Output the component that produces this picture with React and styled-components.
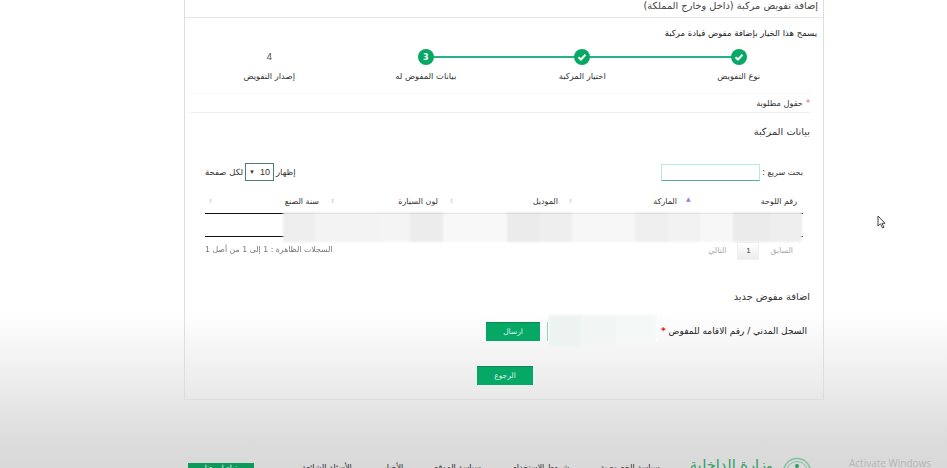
import React from 'react';
import styled, { createGlobalStyle } from 'styled-components';

const GlobalStyle = createGlobalStyle`
  html, body { margin: 0; padding: 0; }
  body {
    font-family: "DejaVu Sans", "Liberation Sans", sans-serif;
    color: #333;
  }
  * { box-sizing: border-box; }
`;

const green = '#06a866';

const Page = styled.div`
  position: relative;
  width: 947px;
  height: 468px;
  overflow: hidden;
  direction: rtl;
  background: linear-gradient(180deg, #fff 0, #fff 310px, #ececec 385px, #dcdcdc 440px, #d9d9d9 468px);
`;

const Panel = styled.main`
  width: 640px;
  height: 400px;
  margin-right: 123px;
  border: 1px solid #ddd;
  border-top: 0;
  display: flex;
  flex-direction: column;
`;

const PanelTitle = styled.h1`
  margin: 0;
  height: 18px;
  padding: 0 5px 0 0;
  border-bottom: 1px solid #e4e4e4;
  font-size: 9.8px;
  font-weight: 400;
  line-height: 11px;
  color: #444;
`;

const Intro = styled.p`
  margin: 10px 0 0;
  padding-right: 6px;
  font-size: 8.5px;
  line-height: 11px;
  color: #222;
`;

const Stepper = styled.ol`
  list-style: none;
  margin: 10px 0 0;
  padding: 0 6px 0 0;
  display: grid;
  grid-template-columns: repeat(4, 156.5px);
`;

const Step = styled.li`
  position: relative;
  display: flex;
  flex-direction: column;
  align-items: center;
  gap: 6px;
  font-size: 8.4px;
  color: #333;

  &::after {
    content: '';
    display: ${p => (p.$line ? 'block' : 'none')};
    position: absolute;
    top: 7px;
    right: 50%;
    width: 100%;
    height: 2px;
    background: #27b08b;
  }
`;

const StepDot = styled.span`
  position: relative;
  z-index: 1;
  width: 16px;
  height: 16px;
  border-radius: 50%;
  background: ${p => (p.$idle ? 'transparent' : green)};
  color: ${p => (p.$idle ? '#555' : '#fff')};
  display: flex;
  align-items: center;
  justify-content: center;
  font-size: ${p => (p.$idle ? '9px' : '8px')};
  font-weight: ${p => (p.$idle ? 400 : 700)};
`;

const StepLabel = styled.span`
  line-height: 11px;
`;

const Required = styled.div`
  margin: 11px 13px 0 5px;
  height: 20px;
  border: 1px solid #f7f7f7;
  border-bottom-color: #eee;
  border-left: 0;
  border-right: 0;
  display: flex;
  align-items: center;
  gap: 3px;
  font-size: 8.2px;
  color: #333;

  span { color: #d66; }
`;

const SectionTitle = styled.h2`
  margin: ${p => p.$top}px 0 0;
  padding-right: 13px;
  font-size: 9.8px;
  line-height: 13px;
  font-weight: 400;
  color: #333;
`;

const TableArea = styled.section`
  position: relative;
  margin: 25px 20px 0;
`;

const Tools = styled.div`
  display: flex;
  justify-content: space-between;
  align-items: center;
  height: 18px;
  font-size: 8.5px;
  color: #333;
`;

const Search = styled.label`
  display: flex;
  align-items: center;
  gap: 2px;
  font-size: 8px;
`;

const SearchInput = styled.span`
  display: block;
  width: 99px;
  height: 17px;
  border: 1px solid #5aab91;
  border-top-color: #b5ecdf;
  border-left-color: #b5ecdf;
  border-right-color: #b5ecdf;
  background: #fff;
`;

const PageSize = styled.div`
  display: flex;
  align-items: center;
  gap: 2px;
  white-space: nowrap;
`;

const SizeSelect = styled.span`
  width: 29px;
  height: 18px;
  border: 1px solid #4f8078;
  direction: ltr;
  display: flex;
  align-items: center;
  justify-content: space-between;
  padding: 0 3px;
  font-family: "Liberation Sans", sans-serif;
  font-size: 9px;

  i { font-style: normal; font-size: 6px; }
`;

const Table = styled.table`
  width: 598px;
  margin-top: 9px;
  border-collapse: collapse;
  table-layout: fixed;
  font-size: 8px;
  color: #333;

  th {
    height: 23px;
    padding: 0 6px 0 0;
    font-weight: 400;
    text-align: right;
    position: relative;
  }
  th:nth-child(1) { width: 120px; }
  th:nth-child(2) { width: 119px; }
  th:nth-child(3) { width: 120px; }
  th:nth-child(4) { width: 119px; }
  td {
    height: 23px;
    border-top: 1px solid #111;
    border-bottom: 1px solid #111;
  }
`;

const SortMark = styled.span`
  position: absolute;
  left: ${p => p.$left}px;
  top: ${p => (p.$active ? 5 : 7)}px;
  font-size: 6px;
  line-height: 8px;
  color: ${p => (p.$active ? '#8d85dd' : '#ddd')};
`;

const Redacted = styled.div`
  position: absolute;
  top: ${p => p.$top}px;
  left: ${p => p.$left}px;
  width: ${p => p.$width}px;
  height: ${p => p.$height}px;
  display: flex;
  filter: blur(1px);
`;

const Patch = styled.span`
  flex: ${p => p.$w} 0 0;
  background: ${p => p.$c};
`;

const TableFoot = styled.div`
  margin-top: 5px;
  display: flex;
  justify-content: space-between;
  align-items: flex-start;
  font-size: 7.8px;
  color: #777;
`;

const Pager = styled.div`
  display: flex;
  align-items: center;
  gap: 11px;
  padding-right: 10px;
  color: #aaa;
`;

const PagerNumber = styled.span`
  width: 22px;
  height: 18px;
  display: flex;
  align-items: center;
  justify-content: center;
  color: #444;
  font-family: "Liberation Sans", sans-serif;
  font-size: 8px;
  background: linear-gradient(180deg, #fff, #ececec);
  border: 1px solid #f2f2f2;
`;

const Info = styled.span`
  line-height: 11px;
  margin-top: 2px;
  filter: blur(0.2px);
`;

const FormRow = styled.div`
  position: relative;
  margin: 19px 0 0;
  padding-right: 16px;
  display: flex;
  align-items: center;
  height: 19px;
`;

const FieldLabel = styled.label`
  width: 149px;
  font-size: 9px;
  color: #222;
  white-space: nowrap;

  b { color: #d22; font-weight: 700; }
`;

const Field = styled.span`
  width: 111px;
  height: 19px;
  margin-left: 7px;
  border-left: 1px solid #8fd0b8;
  background: #fff;
`;

const ActionButton = styled.button`
  width: ${p => p.$w}px;
  height: 19px;
  padding: 0;
  border: 0;
  border-top: 1px solid #0c8752;
  background: ${green};
  color: #dff5ea;
  font-family: inherit;
  font-size: 7.5px;
`;

const BackRow = styled.div`
  margin-top: 25px;
  display: flex;
  justify-content: center;
  padding-left: 2px;
`;

const Footer = styled.footer`
  position: relative;
  height: 68px;
  margin-right: 124px;
  width: 639px;
  padding-right: 11px;
  display: flex;
  align-items: flex-start;
`;

const Logo = styled.div`
  display: flex;
  align-items: flex-start;
  gap: 9px;
  padding-top: 57px;
  white-space: nowrap;
`;

const LogoText = styled.span`
  color: #2f9e63;
  font-size: 14.5px;
  line-height: 17px;
`;

const FooterNav = styled.nav`
  display: flex;
  gap: 31px;
  margin-right: 30px;
  padding-top: 63px;
  font-size: 8px;
  line-height: 10px;
  color: #222;
  white-space: nowrap;
`;

const PortalButton = styled.span`
  position: absolute;
  left: 4px;
  top: 63px;
  width: 66px;
  height: 20px;
  background: #0b9a5c;
  color: #fff;
  font-size: 7px;
  line-height: 10px;
  text-align: center;
`;

const Watermark = styled.span`
  position: absolute;
  left: 849px;
  top: 456px;
  direction: ltr;
  font-family: "Open Sans", sans-serif;
  font-size: 10px;
  line-height: 14px;
  color: #b4b4b4;
  white-space: nowrap;
`;

const Cursor = styled.svg`
  position: absolute;
  left: 877px;
  top: 215px;
`;

const CheckIcon = () => (
  <svg width="10" height="10" viewBox="0 0 10 10">
    <path d="M1.5 5.2 4 7.5 8.5 2.8" fill="none" stroke="#fff" strokeWidth="2" />
  </svg>
);

const Emblem = () => (
  <svg width="30" height="30" viewBox="0 0 30 30" style={{ flex: 'none' }}>
    <circle cx="15" cy="15" r="13.5" fill="none" stroke="#7fc39c" strokeWidth="1.5" />
    <circle cx="15" cy="15" r="10.5" fill="none" stroke="#7fc39c" strokeWidth="1" />
    <circle cx="15" cy="9" r="2" fill="#2f9e63" />
    <path d="M15 11v12" stroke="#2f9e63" strokeWidth="1.5" />
  </svg>
);

const steps = [
  { label: 'نوع التفويض', done: true, line: true },
  { label: 'اختيار المركبة', done: true, line: true },
  { label: 'بيانات المفوض له', num: 3, line: false },
  { label: 'إصدار التفويض', num: 4, idle: true, line: false },
];

const columns = [
  { title: 'رقم اللوحة', left: 3, active: true, mark: '▲' },
  { title: 'الماركة', left: 4, mark: '⬍' },
  { title: 'الموديل', left: 5, mark: '⬍' },
  { title: 'لون السيارة', left: 5, mark: '⬍' },
  { title: 'سنة الصنع', left: 3, mark: '⬍' },
];

// right to left, widths follow the blurred cells of the reference
const tablePatches = [
  [32, '#eeeeee'], [37, '#ebebeb'], [33, '#f7f7f7'], [32, '#f2f2f2'], [33, '#efefef'], [63, '#f7f7f7'],
  [32, '#eeeeee'], [33, '#ebebeb'], [64, '#f8f8f8'], [33, '#ececec'], [30, '#f4f4f4'], [65, '#f3f3f3'], [32, '#eeeeee'],
];

const fieldPatches = [
  [40, '#f4f8f6'], [35, '#f1f6f4'], [32, '#edf3f1'],
];

export default function App() {
  return (
    <Page>
      <GlobalStyle />
      <Panel>
        <PanelTitle>إضافة تفويض مركبة (داخل وخارج المملكة)</PanelTitle>
        <Intro>يسمح هذا الخيار بإضافة مفوض قيادة مركبة</Intro>
        <Stepper>
          {steps.map(s => (
            <Step key={s.label} $line={s.line}>
              <StepDot $idle={s.idle}>{s.done ? <CheckIcon /> : s.num}</StepDot>
              <StepLabel>{s.label}</StepLabel>
            </Step>
          ))}
        </Stepper>
        <Required><span>*</span>حقول مطلوبة</Required>
        <SectionTitle $top={12}>بيانات المركبة</SectionTitle>
        <TableArea>
          <Tools>
            <Search>بحث سريع :<SearchInput /></Search>
            <PageSize>إظهار <SizeSelect><i>▼</i>10</SizeSelect> لكل صفحة</PageSize>
          </Tools>
          <Table>
            <thead>
              <tr>
                {columns.map(c => (
                  <th key={c.title}>
                    {c.title}
                    <SortMark $left={c.left} $active={c.active}>{c.mark}</SortMark>
                  </th>
                ))}
              </tr>
            </thead>
            <tbody>
              <tr><td colSpan={5} /></tr>
            </tbody>
          </Table>
          <TableFoot>
            <Pager>
              <span>السابق</span>
              <PagerNumber>1</PagerNumber>
              <span>التالي</span>
            </Pager>
            <Info>السجلات الظاهرة : 1 إلى 1 من أصل 1</Info>
          </TableFoot>
          <Redacted $top={49} $left={78} $width={519} $height={30}>
            {tablePatches.map(([w, c], i) => <Patch key={i} $w={w} $c={c} />)}
          </Redacted>
        </TableArea>
        <SectionTitle $top={30}>اضافة مفوض جديد</SectionTitle>
        <FormRow>
          <FieldLabel>السجل المدني / رقم الاقامه للمفوض <b>*</b></FieldLabel>
          <Field />
          <ActionButton type="button" $w={54}>ارسال</ActionButton>
          <Redacted $top={-7} $left={364} $width={107} $height={32}>
            {fieldPatches.map(([w, c], i) => <Patch key={i} $w={w} $c={c} />)}
          </Redacted>
        </FormRow>
        <BackRow>
          <ActionButton type="button" $w={56}>الرجوع</ActionButton>
        </BackRow>
      </Panel>
      <Footer>
        <Logo><Emblem /><LogoText>وزارة الداخلية</LogoText></Logo>
        <FooterNav>
          <span>سياسة الخصوصية</span>
          <span>شروط الاستخدام</span>
          <span>سياسة الموقع</span>
          <span>الأخبار</span>
          <span>الأسئلة الشائعة</span>
        </FooterNav>
        <PortalButton>تواصل معنا</PortalButton>
      </Footer>
      <Watermark>Activate Windows</Watermark>
      <Cursor width="10" height="14" viewBox="0 0 10 14">
        <path d="M1 1v10l2.5-2.2L5.5 13l1.5-.7-2-4H8z" fill="#fff" stroke="#444" strokeWidth="1" />
      </Cursor>
    </Page>
  );
}
